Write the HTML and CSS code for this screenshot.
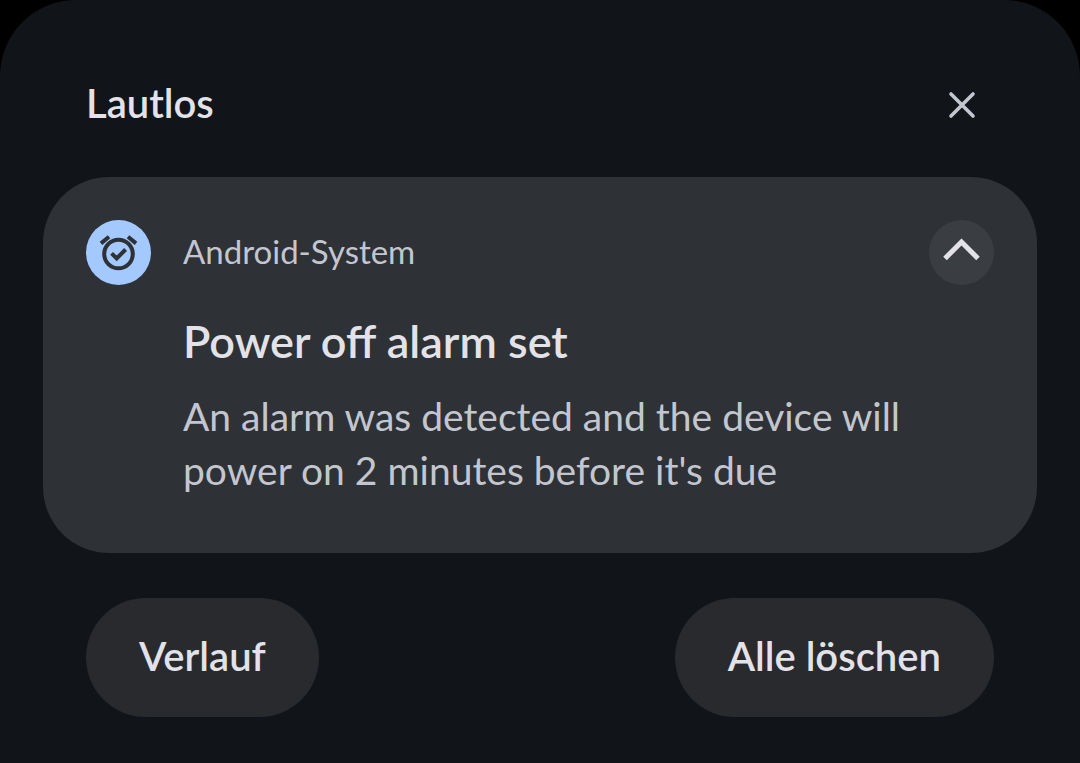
FILE: index.html
```html
<!DOCTYPE html>
<html lang="de">
<head>
<meta charset="utf-8">
<meta name="viewport" content="width=device-width, initial-scale=1">
<title>Lautlos</title>
<link rel="stylesheet" href="styles.css">
</head>
<body>
<main class="shade">
  <header class="section-header">
    <h1 class="section-title">Lautlos</h1>
    <button class="icon-button" type="button" aria-label="Schließen">
      <svg class="close-icon" viewBox="0 0 28 28" aria-hidden="true"><path d="M3 3L25 25M25 3L3 25"/></svg>
    </button>
  </header>
  <article class="card">
    <div class="app-icon">
      <svg viewBox="0 0 65 65" aria-hidden="true"><circle cx="32.5" cy="34" r="14.3"/><path d="M15 23.4L23 16.8M50 23.4L42 16.8M25.6 33.4L30.7 38.4L39.6 29.5"/></svg>
    </div>
    <p class="app-name">Android-System</p>
    <button class="collapse" type="button" aria-label="Minimieren">
      <svg viewBox="0 0 65 65" aria-hidden="true"><path d="M16 38.5L32.5 22L49 38.5"/></svg>
    </button>
    <div class="message">
      <h2 class="message-title">Power off alarm set</h2>
      <p class="message-text">An alarm was detected and the device will power on 2 minutes before it's due</p>
    </div>
  </article>
  <footer class="actions">
    <button class="pill" type="button">Verlauf</button>
    <button class="pill" type="button">Alle löschen</button>
  </footer>
</main>
</body>
</html>
```

FILE: styles.css
```css
* { box-sizing: border-box; }
body {
  margin: 0;
  background: #000;
  color: #e2e2e8;
  font-family: Lato, "Liberation Sans", sans-serif;
}
h1, h2, p { margin: 0; }
button {
  border: 0;
  padding: 0;
  color: inherit;
  font-family: inherit;
}
svg { display: block; fill: none; stroke: currentColor; }
.shade {
  min-height: 100vh;
  padding: 72px 43px 46px;
  background: #111418;
  border-radius: 76px 76px 0 0;
}
.section-header {
  display: flex;
  align-items: center;
  justify-content: space-between;
  height: 66px;
  padding: 0 43px;
}
.section-title {
  padding-bottom: 4px;
  font-size: 40px;
  font-weight: 600;
  line-height: 48px;
}
.icon-button {
  display: grid;
  place-items: center;
  width: 64px;
  height: 64px;
  background: none;
  color: #c3c6cf;
}
.close-icon { width: 28px; height: 28px; stroke-width: 3.6; stroke-linecap: round; }
.card {
  display: grid;
  grid-template-columns: 65px 1fr 65px;
  column-gap: 32px;
  align-items: center;
  margin-top: 39px;
  padding: 43px 43px 56px;
  background: #2e3135;
  border-radius: 66px;
}
.app-icon {
  height: 65px;
  border-radius: 50%;
  background: #a3c9ff;
  color: #2e3135;
}
.app-icon svg { stroke-width: 4; }
.app-name {
  padding-bottom: 4px;
  color: #c3c6cf;
  font-size: 33px;
  line-height: 48px;
}
.collapse {
  height: 65px;
  border-radius: 50%;
  background: #3a3d41;
}
.collapse svg { stroke-width: 5; }
.message { grid-column: 2 / 4; padding-top: 28px; }
.message-title { font-size: 45px; font-weight: 600; line-height: 56px; }
.message-text {
  max-width: 760px;
  padding-top: 20px;
  color: #c3c6cf;
  font-size: 39px;
  line-height: 54px;
}
.actions {
  display: flex;
  justify-content: space-between;
  padding: 45px 43px 0;
}
.pill {
  height: 119px;
  padding: 0 53px 4px;
  border-radius: 60px;
  background: #282a2e;
  font-size: 40px;
  font-weight: 600;
}
```
